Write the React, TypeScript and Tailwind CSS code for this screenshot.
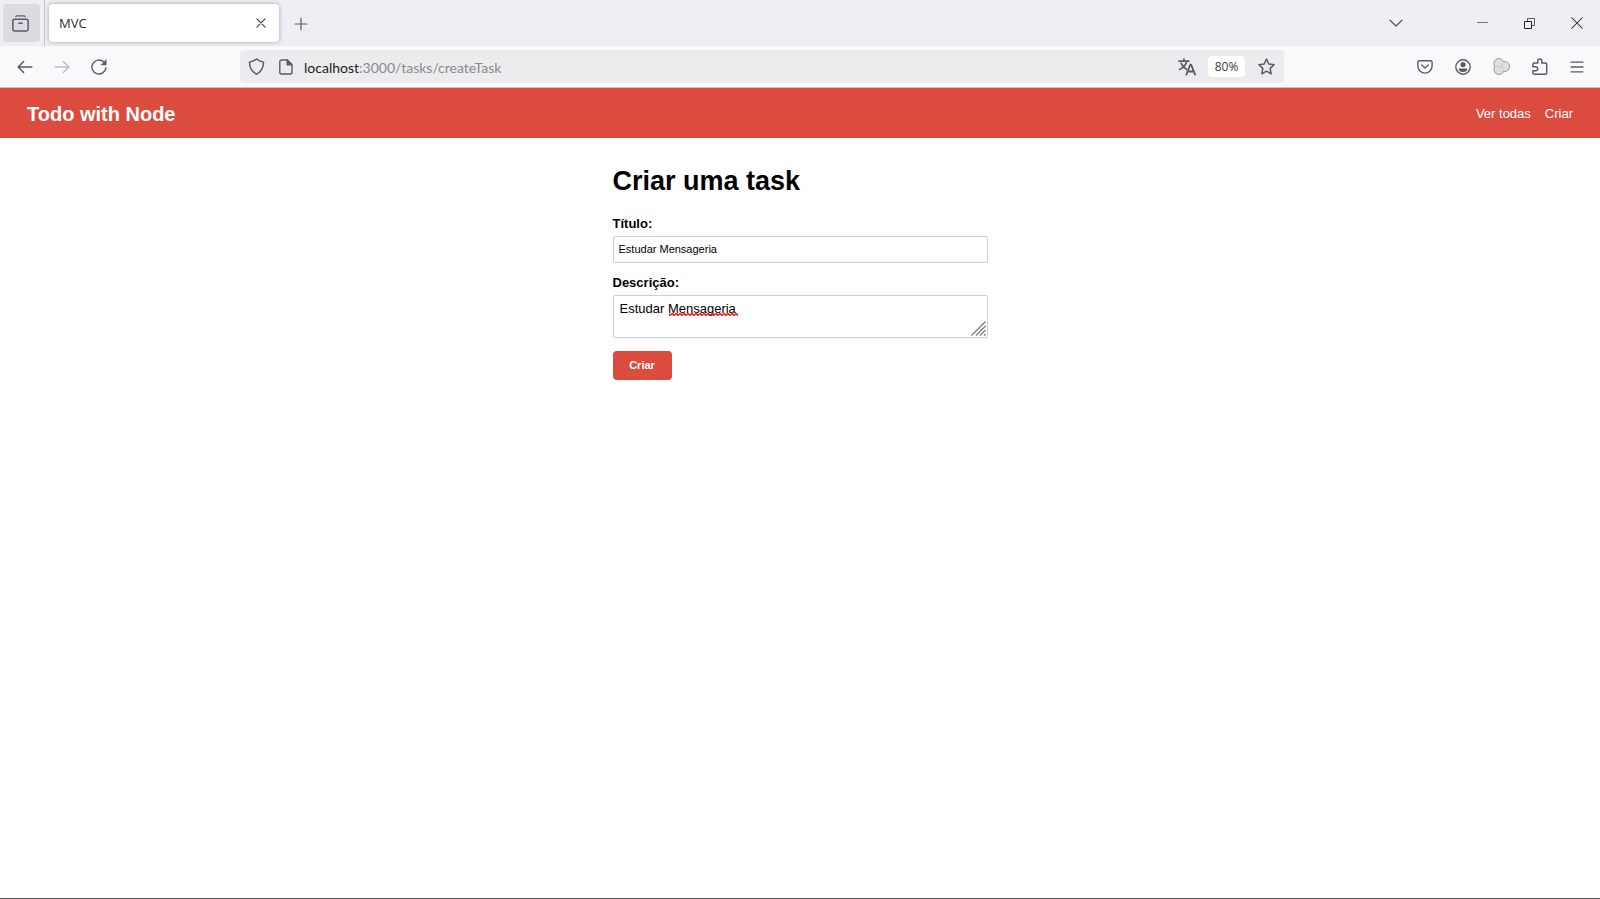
import type { ReactNode } from "react";

type IconProps = { children: ReactNode; className?: string; width?: number };

function Icon({ children, className = "size-4", width = 1.4 }: IconProps) {
  return (
    <svg
      viewBox="0 0 16 16"
      className={className}
      fill="none"
      stroke="currentColor"
      strokeWidth={width}
      strokeLinecap="round"
      strokeLinejoin="round"
      aria-hidden="true"
    >
      {children}
    </svg>
  );
}

type IconButtonProps = { label: string; children: ReactNode; className?: string };

function IconButton({ label, children, className = "w-9 text-[#5b5b66]" }: IconButtonProps) {
  return (
    <button type="button" aria-label={label} className={`flex h-8 shrink-0 items-center justify-center rounded ${className}`}>
      {children}
    </button>
  );
}

function TabStrip() {
  return (
    <div className="flex h-[46px] items-center bg-[#efeef3] pl-[3px]">
      <button
        type="button"
        aria-label="Firefox View"
        className="flex h-[38px] w-[37px] items-center justify-center rounded bg-[#dbdbe1] pr-[2px] text-[#5b5b66]"
      >
        <Icon className="size-[17px]">
          <path d="M3.600 1.400c.3-.4.600-.6 1.100-.6h6.600c.5 0 .8.200 1.100.6" strokeWidth="1.200" />
          <rect x=".8" y="3.900" width="14.400" height="11.200" rx="1.6" />
          <path d="M6.400 7.800h3.200" />
        </Icon>
      </button>
      <div className="mr-1 ml-1 h-full w-px bg-[#c4c4cb]" />
      <div className="flex h-[38px] w-[230px] items-center justify-between rounded bg-white pr-1 pl-[10px] shadow-[0_0_4px_rgba(90,90,105,0.55)]">
        <span className="pt-px text-[13px] text-[#2a2a35]">MVC</span>
        <IconButton label="Fechar aba" className="w-7 text-[#45454f]">
          <Icon className="size-[10px]" width={1.9}>
            <path d="M1.5 1.5l13 13M14.5 1.5l-13 13" />
          </Icon>
        </IconButton>
      </div>
      <IconButton label="Nova aba" className="ml-1 w-9 pt-[2px] text-[#5b5b66]">
        <Icon className="size-[14px]">
          <path d="M8 1.2v13.6M1.2 8h13.6" />
        </Icon>
      </IconButton>
      <div className="ml-auto flex items-center">
        <IconButton label="Listar abas" className="mr-10 w-[46px] text-[#5b5b66]">
          <Icon className="size-[14px]" width={1.5}>
            <path d="M1.2 4.8L8 11.4l6.8-6.6" />
          </Icon>
        </IconButton>
        <IconButton label="Minimizar" className="w-[47px] text-[#77777f]">
          <svg viewBox="0 0 11 11" className="size-[11px]" aria-hidden="true">
            <path d="M0 4.500h11" stroke="currentColor" strokeWidth="1" />
          </svg>
        </IconButton>
        <IconButton label="Restaurar" className="w-[47px] text-[#222]">
          <svg viewBox="0 0 11 11" className="size-[11px]" fill="none" stroke="currentColor" aria-hidden="true">
            <path d="M.5 3.500h7v7h-7z" />
            <path d="M3.500 3V.5h7v7H8" strokeOpacity=".7" />
          </svg>
        </IconButton>
        <IconButton label="Fechar" className="w-[47px] text-[#222]">
          <Icon className="size-[12px]" width={1.4}>
            <path d="M1 1l14 14M15 1L1 15" />
          </Icon>
        </IconButton>
      </div>
    </div>
  );
}

function AddressBar() {
  return (
    <div className="flex h-[33px] w-[1044px] min-w-0 items-center rounded bg-[#ececee]">
      <IconButton label="Proteção contra rastreamento" className="w-[33px] text-[#5b5b66]">
        <Icon className="size-[17px]">
          <path d="M8 .9c1.8 1.5 4 2.400 6.600 3 0 4.800-1.800 8.600-6.600 11.300C3.200 12.500 1.400 8.700 1.400 3.900 4 3.300 6.200 2.400 8 .9z" />
        </Icon>
      </IconButton>
      <IconButton label="Informações do site" className="w-[26px] text-[#5b5b66]">
        <Icon>
          <path d="M3.600 1h5.600l4.800 4.800v7.400a1.800 1.800 0 0 1-1.800 1.800H3.600a1.800 1.800 0 0 1-1.800-1.800V2.800A1.800 1.800 0 0 1 3.600 1z" />
          <path d="M9.200 1v4.800H14z" fill="currentColor" />
        </Icon>
      </IconButton>
      <a href="#url" className="ml-[5px] flex-1 truncate pt-[2px] font-['Lato','Noto_Sans',sans-serif] text-sm text-[#8a8a8f]">
        <span className="text-[#1c1b22]">localhost</span>:3000/tasks/createTask
      </a>
      <IconButton label="Traduzir">
        <Icon className="size-[18px]" width={1.5}>
          <path d="M1 2.800h8.600M5.300 1v1.800M7.800 2.800C7.200 5.800 4.800 8.600 1.400 10.200M2.800 4.800c1 2.400 2.600 4 4.800 5.200" />
          <path d="M7.400 14.800l3.500-8.800h.8l3.500 8.800M8.700 12h5.200" strokeWidth="1.600" />
        </Icon>
      </IconButton>
      <button type="button" className="ml-[3px] h-[21px] w-[37px] rounded-sm bg-white pt-px text-xs leading-none text-[#3c3c46]">
        80%
      </button>
      <IconButton label="Adicionar aos favoritos" className="ml-[3px] w-9 text-[#5b5b66]">
        <Icon className="size-[17px]">
          <path d="M8 .9l2.150 4.700 5 .65-3.700 3.500.95 5.150L8 12.400l-4.400 2.500.95-5.150-3.700-3.500 5-.65z" />
        </Icon>
      </IconButton>
    </div>
  );
}

function Toolbar() {
  return (
    <div className="flex h-[42px] items-center justify-between border-b border-[#c9c0c4] bg-[#f9f9fb] pr-[5px] pl-[7px]">
      <div className="flex items-center gap-[1px]">
        <IconButton label="Voltar">
          <Icon width={1.5}>
            <path d="M6.600 2.500L1.100 8l5.500 5.500M1.300 8h13.600" />
          </Icon>
        </IconButton>
        <IconButton label="Avançar" className="w-9 text-[#bcbcc3]">
          <Icon>
            <path d="M9.400 2.500L14.900 8l-5.500 5.500M14.700 8H1.100" />
          </Icon>
        </IconButton>
        <IconButton label="Recarregar" className="w-9 text-[#5b5b66]">
          <Icon>
            <path d="M14.900 8.800A7 7 0 1 1 12.600 2.800l1.400 1.400" />
            <path d="M15.200 .9v5h-5z" fill="currentColor" strokeWidth=".6" />
          </Icon>
        </IconButton>
      </div>
      <AddressBar />
      <div className="flex items-center gap-[2px]">
        <IconButton label="Pocket">
          <Icon>
            <path d="M2.400 1.800h11.200A1.500 1.500 0 0 1 15.100 3.300V7a7.100 7.100 0 0 1-14.200 0V3.300A1.500 1.500 0 0 1 2.400 1.800z" />
            <path d="M4.800 6L8 9l3.200-3" />
          </Icon>
        </IconButton>
        <IconButton label="Conta">
          <Icon>
            <circle cx="8" cy="8" r="7.200" />
            <circle cx="8" cy="5.600" r="2.600" fill="currentColor" stroke="none" />
            <path d="M3.600 9.400h8.800c0 2.200-1.800 3.600-4.400 3.600s-4.400-1.400-4.400-3.600z" fill="currentColor" stroke="none" />
          </Icon>
        </IconButton>
        <IconButton label="Extensão" className="w-9 text-[#98989c]">
          <Icon className="size-[17px]" width={1}>
            <g fill="#dededf">
              <circle cx="5.600" cy="5.200" r="4.600" />
              <circle cx="5.600" cy="10.800" r="4.600" />
              <circle cx="10.900" cy="8" r="4.600" />
            </g>
            <g fill="#dededf" stroke="none">
              <circle cx="5.600" cy="5.200" r="4.200" />
              <circle cx="5.600" cy="10.800" r="4.200" />
              <circle cx="10.900" cy="8" r="4.200" />
            </g>
            <path d="M4 8.200L8 8l1.200-2.800M8 8l1.200 2.800" stroke="#c6c6c9" strokeWidth=".8" />
          </Icon>
        </IconButton>
        <IconButton label="Extensões">
          <Icon className="size-[17px]">
            <path d="M6.400 4.600V2.800a1.900 1.900 0 0 1 3.800 0v1.800h3.300a1.300 1.300 0 0 1 1.300 1.300v8.100a1.300 1.300 0 0 1-1.300 1.300H3.100a1.300 1.300 0 0 1-1.300-1.300v-2h2.600a1.900 1.900 0 0 0 0-3.800H1.800V5.900a1.300 1.300 0 0 1 1.300-1.300z" />
          </Icon>
        </IconButton>
        <IconButton label="Abrir menu">
          <Icon className="size-[14px]" width={1.5}>
            <path d="M1.200 2.500h13.600M1.200 8h13.600M1.200 13.500h13.600" />
          </Icon>
        </IconButton>
      </div>
    </div>
  );
}

function TaskForm() {
  return (
    <form className="mx-auto flex w-[375px] max-w-full flex-col">
      <h1 className="mb-[19px] text-[27px] leading-8 font-bold">Criar uma task</h1>
      <label htmlFor="title" className="mb-1 text-[13px] leading-4 font-bold">
        Título:
      </label>
      <input
        id="title"
        type="text"
        defaultValue="Estudar Mensageria"
        className="mb-3 h-[27px] rounded-xs border border-[#cccccc] px-[5px] pb-[2px] text-[11px] outline-none"
      />
      <label htmlFor="description" className="mb-1 text-[13px] leading-4 font-bold">
        Descrição:
      </label>
      <div className="relative mb-[13px] flex">
        <textarea
          id="description"
          defaultValue="Estudar Mensageria"
          spellCheck={false}
          className="h-[43px] w-full resize-none rounded-xs border border-[#cccccc] px-[6px] py-[5px] text-[13px] leading-4 outline-none"
        />
        <svg className="pointer-events-none absolute top-[18px] left-14 h-[3px] w-[69px]" aria-hidden="true">
          <defs>
            <pattern id="squiggle" width="4" height="3" patternUnits="userSpaceOnUse">
              <path d="M-1 -.5L1 2.500L3 .5L5 2.500M-1 .5L1 2.500" fill="none" stroke="#f01414" strokeWidth="1.300" />
            </pattern>
          </defs>
          <rect width="69" height="3" fill="url(#squiggle)" />
        </svg>
        <svg
          viewBox="0 0 15 15"
          className="pointer-events-none absolute right-[2px] bottom-[2px] size-[15px]"
          stroke="#77776f"
          strokeWidth="1.200"
          aria-hidden="true"
        >
          <path d="M.5 14.500l14-14M5 14.500l9.500-9.500M9 14.500l5.500-5.500M13 14.500l1.500-1.500" />
        </svg>
      </div>
      <button type="submit" className="h-[29px] w-[59px] rounded bg-[#dc4c3e] text-[11px] font-bold text-white">
        Criar
      </button>
    </form>
  );
}

export default function App() {
  return (
    <div className="flex min-h-screen flex-col border-b border-[#555555] bg-white">
      <div className="font-['Open_Sans','Noto_Sans',sans-serif]">
        <TabStrip />
        <Toolbar />
      </div>
      <div className="font-['Liberation_Sans',Arial,sans-serif] text-black">
        <header className="flex h-[50px] items-center justify-between bg-[#dc4c3e] px-[27px] pt-[2px] text-white">
          <span className="text-xl font-bold">Todo with Node</span>
          <nav className="flex gap-[14px] text-[13px]">
            <a href="#todas">Ver todas</a>
            <a href="#criar">Criar</a>
          </nav>
        </header>
        <main className="pt-[27px]">
          <TaskForm />
        </main>
      </div>
    </div>
  );
}
